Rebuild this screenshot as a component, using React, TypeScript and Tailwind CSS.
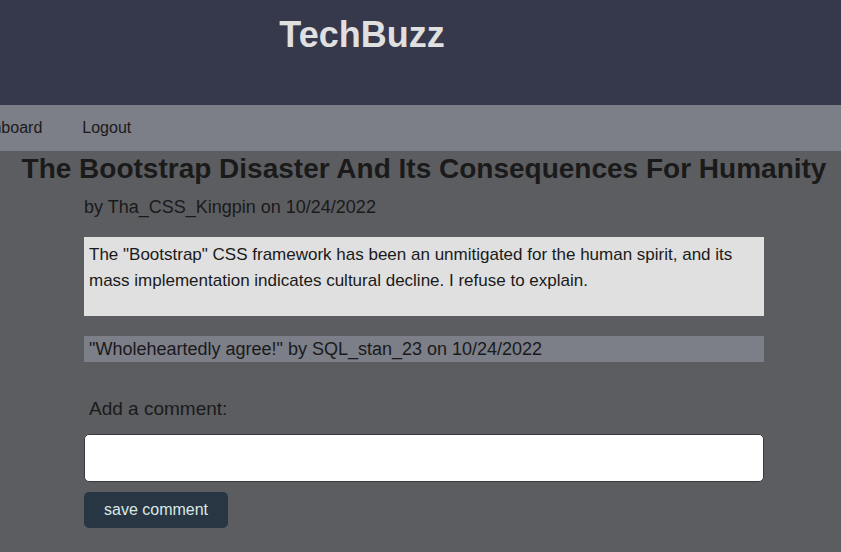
export default function App() {
  return (
    <div className="min-h-screen overflow-x-hidden bg-[#5c5d60] font-['Liberation_Sans',Arial,sans-serif] text-[#1a1a1a]">
      <header className="bg-[#36384c] pt-[6px] pb-[42px] pr-[117px] text-center">
        <h1 className="text-4xl leading-[57px] font-bold text-[#e0e0e0]">TechBuzz</h1>
      </header>
      <nav className="flex h-[46px] items-center gap-10 overflow-hidden bg-[#7c7e88] text-base">
        <a href="#dashboard" className="-ml-9">Dashboard</a>
        <a href="#logout">Logout</a>
      </nav>
      <main className="pr-[77px] pl-[84px]">
        <h2 className="-mx-[70px] flex justify-center text-[28px] leading-[35px] font-bold whitespace-nowrap">
          The Bootstrap Disaster And Its Consequences For Humanity
        </h2>
        <p className="mt-2 text-lg leading-[26px]">by Tha_CSS_Kingpin on 10/24/2022</p>
        <p className="mt-[17px] bg-[#e0e0e0] px-[5px] pt-[5px] pb-[22px] text-[17px] leading-[26px]">
          The "Bootstrap" CSS framework has been an unmitigated for the human spirit, and its mass implementation indicates cultural decline. I refuse to explain.
        </p>
        <p className="mt-5 bg-[#7c7e88] px-[5px] text-lg leading-[26px]">
          "Wholeheartedly agree!" by SQL_stan_23 on 10/24/2022
        </p>
        <form className="mt-[34px] flex flex-col items-start" onSubmit={(e) => e.preventDefault()}>
          <label htmlFor="comment" className="px-[5px] text-[19px] leading-[26px]">Add a comment:</label>
          <input id="comment" type="text" className="mt-3 h-12 w-full rounded-[5px] border border-[#3b3b3e] bg-white px-3 text-lg" />
          <button type="submit" className="mt-[10px] h-9 rounded-[5px] bg-[#283643] px-5 text-base text-[#d9e8e5]">save comment</button>
        </form>
      </main>
    </div>
  );
}
